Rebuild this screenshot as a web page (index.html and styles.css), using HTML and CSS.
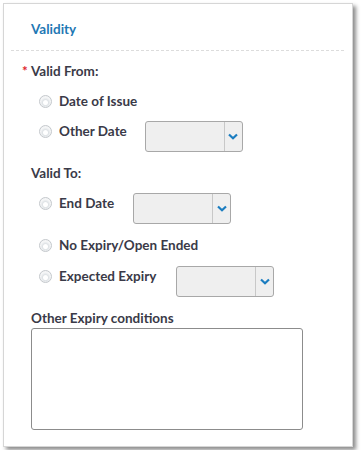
FILE: index.html
```html
<!DOCTYPE html>
<html lang="en">
	<head>
		<meta charset="UTF-8" />
		<meta name="viewport" content="width=device-width, initial-scale=1.0" />
		<title>Validity</title>
		<link rel="stylesheet" href="styles.css">
	</head>
	<body>
		<div class="panel">
			<h2 class="panel-title">Validity</h2>
			<div class="divider"></div>

			<div class="group-label"><span class="required">*</span>Valid From:</div>
			<label class="option"><span class="radio"></span>Date of Issue</label>
			<div class="option-row">
				<label class="option"><span class="radio"></span>Other Date</label>
				<div class="select select-other"><span class="select-arrow"><svg width="10" height="7" viewBox="0 0 10 7"><path d="M1 1.5 L5 5.2 L9 1.5" fill="none" stroke="#1b7dc0" stroke-width="2.2"/></svg></span></div>
			</div>

			<div class="group-label group-to">Valid To:</div>
			<div class="option-row">
				<label class="option"><span class="radio"></span>End Date</label>
				<div class="select select-end"><span class="select-arrow"><svg width="10" height="7" viewBox="0 0 10 7"><path d="M1 1.5 L5 5.2 L9 1.5" fill="none" stroke="#1b7dc0" stroke-width="2.2"/></svg></span></div>
			</div>
			<label class="option option-gap"><span class="radio"></span>No Expiry/Open Ended</label>
			<div class="option-row option-gap">
				<label class="option"><span class="radio"></span>Expected Expiry</label>
				<div class="select select-expected"><span class="select-arrow"><svg width="10" height="7" viewBox="0 0 10 7"><path d="M1 1.5 L5 5.2 L9 1.5" fill="none" stroke="#1b7dc0" stroke-width="2.2"/></svg></span></div>
			</div>

			<div class="field-label">Other Expiry conditions</div>
			<textarea class="conditions"></textarea>
		</div>
	</body>
</html>
```

FILE: styles.css
```css
body {
	margin: 0;
	padding: 3px;
	background: #fff;
	font-family: Lato, "Open Sans", sans-serif;
	font-size: 13.5px;
	font-weight: bold;
	color: #3a3a48;
}
.panel {
	box-sizing: border-box;
	width: 350px;
	height: 444px;
	border: 1px solid #d6d6d6;
	background: #fff;
	box-shadow: 3px 3px 4px rgba(0, 0, 0, 0.45);
}
.panel-title {
	margin: 0;
	padding: 15px 0 11px 27px;
	font-size: 13.5px;
	line-height: 20px;
	color: #1f78b4;
}
.divider {
	margin: 0 8px 0 7px;
	border-top: 1px dashed #dcdcdc;
}
.group-label {
	margin-top: 10px;
	padding-left: 18px;
	line-height: 20px;
}
.required {
	display: inline-block;
	width: 9px;
	color: #e0262b;
}
.group-to {
	margin-top: 11px;
	padding-left: 27px;
}
.option {
	display: flex;
	align-items: center;
	margin-top: 10px;
	padding-left: 35px;
	line-height: 20px;
}
.option-row {
	display: flex;
	align-items: flex-start;
	margin-top: 10px;
}
.option-row .option {
	margin-top: 0;
}
.option-gap {
	margin-top: 11px;
}
.radio {
	box-sizing: border-box;
	width: 13px;
	height: 13px;
	margin-right: 7px;
	border: 1px solid #c4c8cc;
	border-radius: 50%;
	background: radial-gradient(circle at 50% 60%, #fff 0, #fff 2px, #dfe3e6 3px, #f4f5f6 5px);
}
.select {
	box-sizing: border-box;
	display: flex;
	justify-content: flex-end;
	width: 98px;
	height: 31px;
	border: 1px solid #a8a8a8;
	border-radius: 3px;
	background: #efefef;
}
.select-arrow {
	display: flex;
	align-items: center;
	justify-content: center;
	width: 17px;
	border-left: 1px solid #c8c8c8;
}
.select-other {
	margin-left: 18px;
}
.select-end {
	margin-left: 19px;
}
.select-expected {
	margin-left: 20px;
}
.field-label {
	margin-top: 12px;
	padding-left: 27px;
	line-height: 19px;
}
.conditions {
	display: block;
	box-sizing: border-box;
	width: 272px;
	height: 102px;
	margin: 0 0 0 27px;
	border: 1px solid #8c8c8c;
	border-radius: 3px;
	resize: none;
}
```
